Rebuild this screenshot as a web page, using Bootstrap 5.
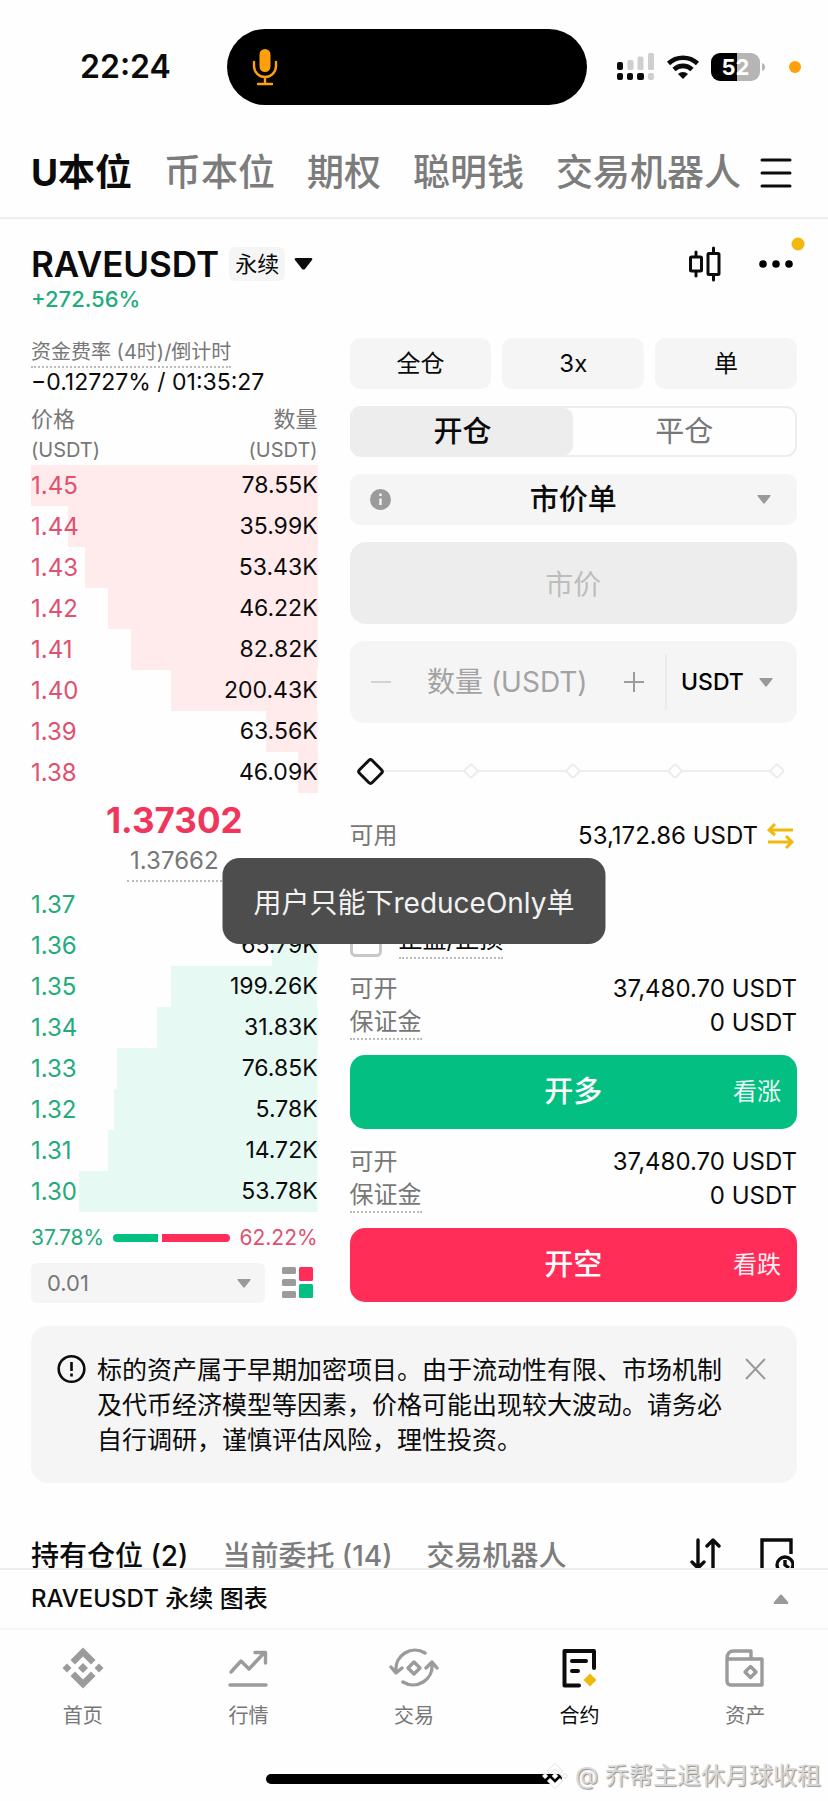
<!DOCTYPE html>
<html lang="zh-CN">
<head>
<meta charset="utf-8">
<meta name="viewport" content="width=device-width, initial-scale=1">
<title>RAVEUSDT 永续</title>
<link href="https://cdn.jsdelivr.net/npm/bootstrap@5.3.0/dist/css/bootstrap.min.css" rel="stylesheet">
<style>
:root{--up:#03bf82;--down:#ff2d58;--up-text:#22ab7c;--down-text:#e0506f;--grey:#777;--soft:#f5f5f5;--mid:#ededed;--faint:#a0a0a0;--gold:#f0b90b}
body{font-family:Inter,"Noto Sans CJK SC",sans-serif;font-size:22px;line-height:34px;color:#0b0b0b;background:#fefefe}
button,input,select{font-family:inherit}
svg{display:block;flex:none}
.px-page{padding-left:31px;padding-right:31px}

.statusbar{display:grid;grid-template-columns:227fr 360fr 241fr;height:134px;align-items:center}
.clock{padding-left:80px;font-size:32px;font-weight:600}
.island{height:76px;border-radius:38px;background:#000;padding-left:25px}
.status-icons{padding-left:30px;gap:11px}
.battery{width:49px;height:28px;border-radius:9px;background:linear-gradient(90deg,#000 53%,#b5b5b5 53%);color:#fff;font-size:22px;font-weight:700;line-height:28px}
.rec-dot{width:12px;height:12px;background:#ff9f0a;margin-left:13px}

.topnav{height:85px;padding-bottom:5px;border-bottom:2px solid #efefef}
.markets{gap:32px;white-space:nowrap;font-size:37px;line-height:40px}
.topnav a,.postabs a{color:#7c7c7c;text-decoration:none;font-weight:500}
.topnav a.active,.postabs a.active{color:#0b0b0b}
.topnav a.active{font-weight:700}
.iconbtn{border:0;background:none;padding:0;color:#0b0b0b}

.symbolbar{padding-top:23px}
.symbol{font-size:35px;font-weight:600;line-height:44px}
.tagbox{background:var(--soft);border-radius:6px;padding:0 6px;line-height:34px;margin-left:10px}
.change{color:var(--up-text);line-height:26px;font-weight:500}
.alertdot{width:13px;height:13px;background:var(--gold);top:-15px;right:-14px}

.trade{display:grid;grid-template-columns:minmax(0,287fr) minmax(0,448fr);gap:32px;margin-top:26px}
.hint{color:var(--grey);border-bottom:2px dotted #bbb}
.funding{font-size:20px;line-height:28px}
.countdown{font-size:23px;line-height:28px}
.book{width:100%;border-collapse:collapse}
.book th{color:var(--grey);font-weight:400;line-height:30px;padding:0}
.book th span{font-size:20px}
.book td{height:41px;padding:0;line-height:41px;font-size:24px}
.book td:last-child{font-size:23px}
.asks tr{background:linear-gradient(#ffeaec,#ffeaec) right/var(--depth) 100% no-repeat}
.bids tr{background:linear-gradient(#e7f9f3,#e7f9f3) right/var(--depth) 100% no-repeat}
.asks td:first-child{color:var(--down-text)}
.bids td:first-child{color:var(--up-text)}
.lastprice{font-size:35px;font-weight:700;line-height:44px;color:#f0365c;padding-top:5px}
.markprice{font-size:24px;line-height:38px;padding:0 3px;margin-bottom:2px}
.longshort{margin-top:10px;height:32px;font-size:21px;gap:9px}
.longshort .split{height:8px;border-radius:4px;gap:4px}
.step{height:40px;margin-top:9px;gap:17px}

.softbox{background-color:var(--soft);border:0;border-radius:10px;color:#0b0b0b}
.sel{appearance:none;-webkit-appearance:none;outline:0;background-image:url("data:image/svg+xml,%3Csvg xmlns='http://www.w3.org/2000/svg' viewBox='0 0 14 9'%3E%3Cpath d='M1 0h12q1 0 .5 1L8 8q-1 1-2 0L.5 1Q0 0 1 0' fill='%23999'/%3E%3C/svg%3E");background-repeat:no-repeat;background-size:14px 9px;background-position:right 26px center}
.step .sel{height:40px;padding:0 16px;border-radius:6px;color:var(--grey);background-position:right 14px center}
.form-side{display:flex;flex-direction:column}
.stack{display:grid;grid-template-columns:minmax(0,1fr);gap:17px}
.pills{display:grid;grid-template-columns:repeat(3,1fr);gap:11px}
.pill{height:51px;font-size:24px;padding:0}
.seg{height:51px;border:2px solid var(--mid);border-radius:11px}
.seg label{font-size:29px;color:var(--grey);cursor:pointer;border-radius:9px}
.seg .btn-check:checked+label{background:var(--mid);color:#0b0b0b;font-weight:500}
.ordertype{height:51px;font-size:29px;font-weight:500;text-align:center;text-align-last:center;padding:0 60px;width:100%}
.infoicon{left:20px;top:15px}
.pricebox{height:82px;border-radius:16px;background:var(--mid);border:0;text-align:center;font-size:28px;padding-top:4px;width:100%}
.pricebox::placeholder{color:#bdbdbd}
.amount{height:82px;border-radius:14px;padding-left:20px}
.amount input{border:0;background:none;min-width:0;width:0;padding:0;font-size:28px;text-align:center;outline:0}
.amount input::placeholder{color:#a3a3a3}
.amount .sel{border:0;border-left:2px solid #ececec;background-color:transparent;height:56px;width:132px;padding-left:14px;font-size:23px;font-weight:500;background-position:right 24px center}
.plus{margin-right:20px}
.slide{height:34px;margin:31px 10px}
.slide .line{left:10px;right:10px;top:16px;height:2px;background:#eee}
.slide .ticks{left:4px;right:4px;top:11px}
.slide .ticks i{width:12px;height:12px;border:2px solid #ececec;border-radius:3px;background:#fefefe;transform:rotate(45deg)}
.slide input{appearance:none;-webkit-appearance:none;width:100%;height:34px;background:none;margin:0}
.slide input::-webkit-slider-thumb{-webkit-appearance:none;width:21px;height:21px;border:3px solid #111;border-radius:4px;background:#fefefe;transform:rotate(45deg)}
.val{font-size:24px}
.lbl{font-size:24px;color:var(--grey)}
.swap{margin:0 3px 0 9px}
.tpsl{margin-top:72px;margin-bottom:15px;height:32px;gap:17px}
.tpsl input{width:32px;height:32px;margin:0;border:3px solid #c8c8c8;border-radius:9px}
.tpsl label{font-size:24px;border-bottom:2px dotted #bbb;height:36px;color:#0b0b0b}
.lbl.hint{line-height:32px}
.cta{height:74px;border:0;border-radius:15px;color:#fff;font-size:29px;font-weight:500;margin:15px 0 16px;position:relative}
.cta small{position:absolute;right:16px;top:20px;font-size:24px;line-height:34px;font-weight:400;opacity:.92}
.cta.last{margin-bottom:0}

.notice{margin-top:23px;padding:27px 31px 25px 26px;border-radius:17px;background:var(--soft)}
.notice p{font-size:25px;line-height:35px;width:626px;max-width:100%;margin-left:11px}
.postabs{margin-top:53px;font-size:28px;line-height:40px;gap:34px;white-space:nowrap}
.posttools{gap:38px;margin-right:3px}

.dock{background:#fefefe;border-top:2px solid #eee}
.chartbar{height:60px;font-size:24px;font-weight:500;border-bottom:2px solid #f6f6f6}
.tabbar{padding-top:17px;height:144px}
.tabbar a{flex:1 1 0;color:var(--grey);text-decoration:none;font-size:20px;line-height:30px;gap:12px}
.tabbar a svg{color:#9b9b9b}
.tabbar a.active{color:#0b0b0b}
.tabbar a.active svg{color:#0b0b0b}
.homebar{width:296px;height:10px;border-radius:5px;background:#000}
.homewrap{height:27px}
.stamp{right:7px;bottom:8px;font-size:24px;gap:7px;color:#d9d9d9;text-shadow:1px 1px 1px #8c8c8c;white-space:nowrap}

.toastbox{z-index:1040;background:#4d4d4d;color:#f2f2f2;border-radius:17px;font-size:28px;line-height:40px;padding:25px 31px 21px;white-space:nowrap}
</style>
</head>
<body>
<header>
  <div class="statusbar">
    <div class="clock">22:24</div>
    <div class="island d-flex align-items-center">
      <svg width="26" height="38" viewBox="0 0 26 38" fill="none" stroke="#ff9f0a" stroke-width="2.4" stroke-linecap="round"><rect x="7.5" y="1" width="11" height="23" rx="5.5" fill="#ff9f0a" stroke="none"/><path d="M2 14v4a11 11 0 0 0 22 0v-4M13 29v7M6 36h14"/></svg>
    </div>
    <div class="status-icons d-flex align-items-center">
      <svg width="38" height="28" viewBox="0 0 38 28"><g fill="#0b0b0b"><rect y="9" width="6" height="8" rx="2"/><rect y="20" width="6" height="7" rx="2"/><rect x="10" y="20" width="6" height="7" rx="2"/><rect x="20" y="20" width="7" height="7" rx="2"/></g><g fill="#cfcfcf"><rect x="10.500" y="7" width="6" height="10" rx="1.500"/><rect x="20.500" y="3.500" width="6" height="13.500" rx="1.500"/><rect x="31" y="0" width="6" height="17" rx="1.500"/><rect x="31" y="20" width="6" height="7" rx="2"/></g></svg>
      <svg width="34" height="26" viewBox="0 0 34 26" fill="none" stroke="#0b0b0b" stroke-width="4.600"><path d="M2.500 9.500a21 21 0 0 1 29 0M8 15.500a13 13 0 0 1 18 0"/><path d="M17 25l-5-5a7 7 0 0 1 10 0z" fill="#0b0b0b" stroke="none"/></svg>
      <div class="d-flex align-items-center">
        <div class="battery text-center">52</div>
        <svg width="5" height="10" viewBox="0 0 5 10"><path d="M2 1q3 1 3 4t-3 4z" fill="#b5b5b5"/></svg>
      </div>
      <span class="rec-dot rounded-circle"></span>
    </div>
  </div>
  <nav class="topnav px-page d-flex align-items-center justify-content-between">
    <div class="markets d-flex">
      <a class="active" href="#">U本位</a><a href="#">币本位</a><a href="#">期权</a><a href="#">聪明钱</a><a href="#">交易机器人</a>
    </div>
    <button class="iconbtn" type="button" aria-label="菜单"><svg width="38" height="32" viewBox="0 0 38 32" stroke="currentColor" stroke-width="3" stroke-linecap="round"><path d="M3 3h28M3 16h28M3 29h28"/></svg></button>
  </nav>
</header>

<main class="px-page">
  <div class="symbolbar d-flex align-items-center">
    <h1 class="symbol m-0">RAVEUSDT</h1>
    <span class="tagbox">永续</span>
    <button class="iconbtn ms-2" type="button" aria-label="选择合约"><svg width="22" height="14" viewBox="0 0 22 14"><path d="M3 1h15q2 0 1 2l-7 9q-1.500 1-3 0L2 3Q1 1 3 1" fill="#0b0b0b"/></svg></button>
    <button class="iconbtn ms-auto" type="button" aria-label="K线"><svg width="34" height="36" viewBox="0 0 34 36" fill="none" stroke="currentColor" stroke-width="3" stroke-linecap="round"><rect x="1.500" y="11" width="11" height="14" rx="1"/><path d="M7 6v4M7 26v4M24.500 2v5M24.500 29v5"/><rect x="19" y="7.500" width="11" height="21" rx="1"/></svg></button>
    <button class="iconbtn position-relative ms-4 ps-2" type="button" aria-label="更多"><svg width="42" height="10" viewBox="0 0 42 10"><circle cx="8" cy="5" r="3.800"/><circle cx="21" cy="5" r="3.800"/><circle cx="34" cy="5" r="3.800"/></svg><span class="alertdot rounded-circle position-absolute translate-middle"></span></button>
  </div>
  <div class="change">+272.56%</div>

  <div class="trade">
    <section>
      <div class="d-flex flex-column align-items-start">
        <span class="hint funding">资金费率 (4时)/倒计时</span>
        <span class="countdown">−0.12727% / 01:35:27</span>
      </div>
      <table class="book mt-2">
        <thead><tr><th>价格<br><span>(USDT)</span></th><th class="text-end">数量<br><span>(USDT)</span></th></tr></thead>
        <tbody class="asks">
          <tr style="--depth:100%"><td>1.45</td><td class="text-end">78.55K</td></tr>
          <tr style="--depth:87%"><td>1.44</td><td class="text-end">35.99K</td></tr>
          <tr style="--depth:81%"><td>1.43</td><td class="text-end">53.43K</td></tr>
          <tr style="--depth:73%"><td>1.42</td><td class="text-end">46.22K</td></tr>
          <tr style="--depth:65%"><td>1.41</td><td class="text-end">82.82K</td></tr>
          <tr style="--depth:51%"><td>1.40</td><td class="text-end">200.43K</td></tr>
          <tr style="--depth:18%"><td>1.39</td><td class="text-end">63.56K</td></tr>
          <tr style="--depth:7%"><td>1.38</td><td class="text-end">46.09K</td></tr>
        </tbody>
      </table>
      <div class="d-flex flex-column align-items-center">
        <div class="lastprice">1.37302</div>
        <div class="markprice hint">1.37662</div>
      </div>
      <table class="book">
        <tbody class="bids">
          <tr style="--depth:6%"><td>1.37</td><td></td></tr>
          <tr style="--depth:16%"><td>1.36</td><td class="text-end">65.79K</td></tr>
          <tr style="--depth:51%"><td>1.35</td><td class="text-end">199.26K</td></tr>
          <tr style="--depth:56%"><td>1.34</td><td class="text-end">31.83K</td></tr>
          <tr style="--depth:70%"><td>1.33</td><td class="text-end">76.85K</td></tr>
          <tr style="--depth:71%"><td>1.32</td><td class="text-end">5.78K</td></tr>
          <tr style="--depth:73%"><td>1.31</td><td class="text-end">14.72K</td></tr>
          <tr style="--depth:83%"><td>1.30</td><td class="text-end">53.78K</td></tr>
        </tbody>
      </table>
      <div class="longshort d-flex align-items-center">
        <span style="color:var(--up-text)">37.78%</span>
        <div class="split d-flex flex-fill overflow-hidden"><div style="width:37.78%;background:var(--up)"></div><div class="flex-fill" style="background:var(--down)"></div></div>
        <span style="color:var(--down-text)">62.22%</span>
      </div>
      <div class="step d-flex align-items-center">
        <select class="softbox sel flex-fill" aria-label="价格精度"><option>0.01</option></select>
        <button class="iconbtn" type="button" aria-label="盘口样式"><svg width="36" height="32" viewBox="0 0 36 32"><g fill="#9b9b9b"><rect y="0" width="14" height="7" rx="1.500"/><rect y="12" width="14" height="7" rx="1.500"/><rect y="24" width="14" height="7" rx="1.500"/></g><rect x="17" width="14" height="14" rx="1.500" fill="#ff2d58"/><rect x="17" y="17" width="14" height="14" rx="1.500" fill="#03bf82"/></svg></button>
      </div>
    </section>

    <form class="form-side" onsubmit="return false">
      <div class="stack">
        <div class="pills">
          <button class="softbox pill" type="button">全仓</button>
          <button class="softbox pill" type="button">3x</button>
          <button class="softbox pill" type="button">单</button>
        </div>
        <div class="seg d-flex">
          <input class="btn-check" type="radio" name="side" id="open" checked><label class="w-50 h-100 d-flex align-items-center justify-content-center" for="open">开仓</label>
          <input class="btn-check" type="radio" name="side" id="close"><label class="w-50 h-100 d-flex align-items-center justify-content-center" for="close">平仓</label>
        </div>
        <div class="position-relative">
          <select class="softbox sel ordertype d-block" aria-label="订单类型"><option>市价单</option></select>
          <svg class="infoicon position-absolute" width="21" height="21" viewBox="0 0 21 21"><circle cx="10.500" cy="10.500" r="10.500" fill="#9b9b9b"/><path d="M10.500 9.500v6.500M10.500 4.500v2.500" stroke="#f5f5f5" stroke-width="2.400"/></svg>
        </div>
        <input class="pricebox" type="text" placeholder="市价" aria-label="价格" disabled>
        <div class="softbox amount d-flex align-items-center">
          <button class="iconbtn" type="button" aria-label="减少"><svg width="22" height="22" viewBox="0 0 22 22" stroke="#d2d2d2" stroke-width="2"><path d="M1 11h20"/></svg></button>
          <input class="flex-fill" type="text" placeholder="数量 (USDT)" aria-label="数量 (USDT)">
          <button class="iconbtn plus" type="button" aria-label="增加"><svg width="22" height="22" viewBox="0 0 22 22" stroke="#9b9b9b" stroke-width="2"><path d="M1 11h20M11 1v20"/></svg></button>
          <select class="sel" aria-label="单位"><option>USDT</option></select>
        </div>
      </div>
      <div class="slide position-relative">
        <div class="line position-absolute"></div>
        <div class="ticks position-absolute d-flex justify-content-between"><i></i><i></i><i></i><i></i><i></i></div>
        <input class="position-relative d-block" type="range" min="0" max="100" value="0" aria-label="仓位比例">
      </div>
      <div class="d-flex justify-content-between align-items-center">
        <span class="lbl">可用</span>
        <span class="d-flex align-items-center val">53,172.86 USDT<button class="iconbtn swap" type="button" aria-label="划转"><svg width="27" height="26" viewBox="0 0 27 26" fill="none" stroke="#f0b90b" stroke-width="3"><path d="M26 7H3M8 1L2 7l6 5M1 19h23M19 13l6 6-6 6"/></svg></button></span>
      </div>
      <div class="tpsl d-flex align-items-center">
        <input class="form-check-input" type="checkbox" id="tpsl"><label for="tpsl">止盈/止损</label>
      </div>
      <div class="d-flex justify-content-between"><span class="lbl">可开</span><span class="val">37,480.70 USDT</span></div>
      <div class="d-flex justify-content-between"><span class="lbl hint">保证金</span><span class="val">0 USDT</span></div>
      <button class="cta" style="background:var(--up)" type="button">开多<small>看涨</small></button>
      <div class="d-flex justify-content-between"><span class="lbl">可开</span><span class="val">37,480.70 USDT</span></div>
      <div class="d-flex justify-content-between"><span class="lbl hint">保证金</span><span class="val">0 USDT</span></div>
      <button class="cta last" style="background:var(--down)" type="button">开空<small>看跌</small></button>
    </form>
  </div>

  <div class="notice d-flex align-items-start">
    <svg width="29" height="35" viewBox="0 0 29 35" fill="none" stroke="#0b0b0b" stroke-width="2.600"><circle cx="14.500" cy="16" r="12.800"/><path d="M14.500 9v9M14.500 20.500v3"/></svg>
    <p class="mb-0">标的资产属于早期加密项目。由于流动性有限、市场机制及代币经济模型等因素，价格可能出现较大波动。请务必自行调研，谨慎评估风险，理性投资。</p>
    <button class="iconbtn ms-auto" type="button" aria-label="关闭"><svg width="21" height="32" viewBox="0 0 21 32" stroke="#999" stroke-width="2"><path d="M1 6l19 20M20 6L1 26"/></svg></button>
  </div>

  <div class="postabs d-flex align-items-center">
    <a class="active" href="#">持有仓位 (2)</a><a href="#">当前委托 (14)</a><a href="#">交易机器人</a>
    <div class="posttools d-flex align-items-start ms-auto">
      <button class="iconbtn" type="button" aria-label="排序"><svg width="32" height="34" viewBox="0 0 32 34" fill="none" stroke="currentColor" stroke-width="3.400" stroke-linecap="round" stroke-linejoin="round"><path d="M8 3v27M2 25l6 6 6-6M23 31V4M17 9l6-6 6 6"/></svg></button>
      <button class="iconbtn" type="button" aria-label="历史"><svg width="34" height="38" viewBox="0 0 34 38" fill="none" stroke="currentColor" stroke-width="3.400"><path d="M14 36H2V3h29v14"/><circle cx="25" cy="28" r="8"/><path d="M25 23v5l4 3"/></svg></button>
    </div>
  </div>
</main>

<div class="toastbox position-fixed top-50 start-50 translate-middle" role="status">用户只能下reduceOnly单</div>

<footer class="dock fixed-bottom">
  <div class="chartbar px-page d-flex align-items-center justify-content-between">
    <span>RAVEUSDT 永续 图表</span>
    <button class="iconbtn me-2" type="button" aria-label="展开"><svg width="16" height="10" viewBox="0 0 16 10"><path d="M7 1q1-1 2 0l6 7q1 2-1 2H2Q0 10 1 8z" fill="#999"/></svg></button>
  </div>
  <nav class="tabbar d-flex align-items-start">
    <a class="d-flex flex-column align-items-center" href="#"><svg width="42" height="42" viewBox="0 0 42 42" fill="currentColor"><path d="M21 .500L33.500 13l-4.500 4.500-8-8-8 8L8.500 13zM21 41.500L8.500 29l4.500-4.500 8 8 8-8 4.500 4.500zM5 16.500L9.500 21 5 25.500.500 21zM37 16.500l4.500 4.500-4.500 4.500-4.500-4.500zM21 16l5 5-5 5-5-5z"/></svg>首页</a>
    <a class="d-flex flex-column align-items-center" href="#"><svg width="42" height="42" viewBox="0 0 42 42" fill="none" stroke="currentColor" stroke-width="3.400" stroke-linecap="round" stroke-linejoin="round"><path d="M4 25l10-11 8 8L37 6M28 5.500h10.500V16M3 38h36"/></svg>行情</a>
    <a class="d-flex flex-column align-items-center" href="#"><svg width="50" height="42" viewBox="0 0 50 42" fill="none" stroke="currentColor" stroke-width="3.400" stroke-linecap="round" stroke-linejoin="round"><path d="M36 6A19 19 0 0 0 7 24M2 20l5 6 6-5M14 35a19 19 0 0 0 29-18M37 21l6-6 5 6"/><path d="M25 15l6 6-6 6-6-6z"/></svg>交易</a>
    <a class="active d-flex flex-column align-items-center" href="#"><svg width="42" height="42" viewBox="0 0 42 42" fill="none" stroke="currentColor" stroke-width="4" stroke-linecap="round" stroke-linejoin="round"><path d="M20 38.500H5.500V4H35v17M13 14h14M13 24h6"/><path d="M31 26.500l6.500 6.500-6.500 6.500-6.500-6.500z" fill="#f0b90b" stroke="none"/></svg>合约</a>
    <a class="d-flex flex-column align-items-center" href="#"><svg width="42" height="42" viewBox="0 0 42 42" fill="none" stroke="currentColor" stroke-width="3.400" stroke-linejoin="round"><path d="M3 12v22q0 4 4 4h31V12H3q0-8 7-8h17v8"/><path d="M26.500 19.500l5.500 5.500-5.500 5.500-5.500-5.500z"/></svg>资产</a>
  </nav>
  <div class="homewrap"><div class="homebar mx-auto"></div></div>
  <div class="stamp position-absolute d-flex align-items-center">
    <svg width="26" height="28" viewBox="0 0 42 42" fill="#fff" stroke="#ccc" stroke-width="1"><path d="M21 .500L33.500 13l-4.500 4.500-8-8-8 8L8.500 13zM21 41.500L8.500 29l4.500-4.500 8 8 8-8 4.500 4.500zM5 16.500L9.500 21 5 25.500.500 21zM37 16.500l4.500 4.500-4.500 4.500-4.500-4.500zM21 16l5 5-5 5-5-5z"/></svg>
    <span>@ 乔帮主退休月球收租</span>
  </div>
</footer>
<script src="https://cdn.jsdelivr.net/npm/bootstrap@5.3.0/dist/js/bootstrap.bundle.min.js"></script>
</body>
</html>
